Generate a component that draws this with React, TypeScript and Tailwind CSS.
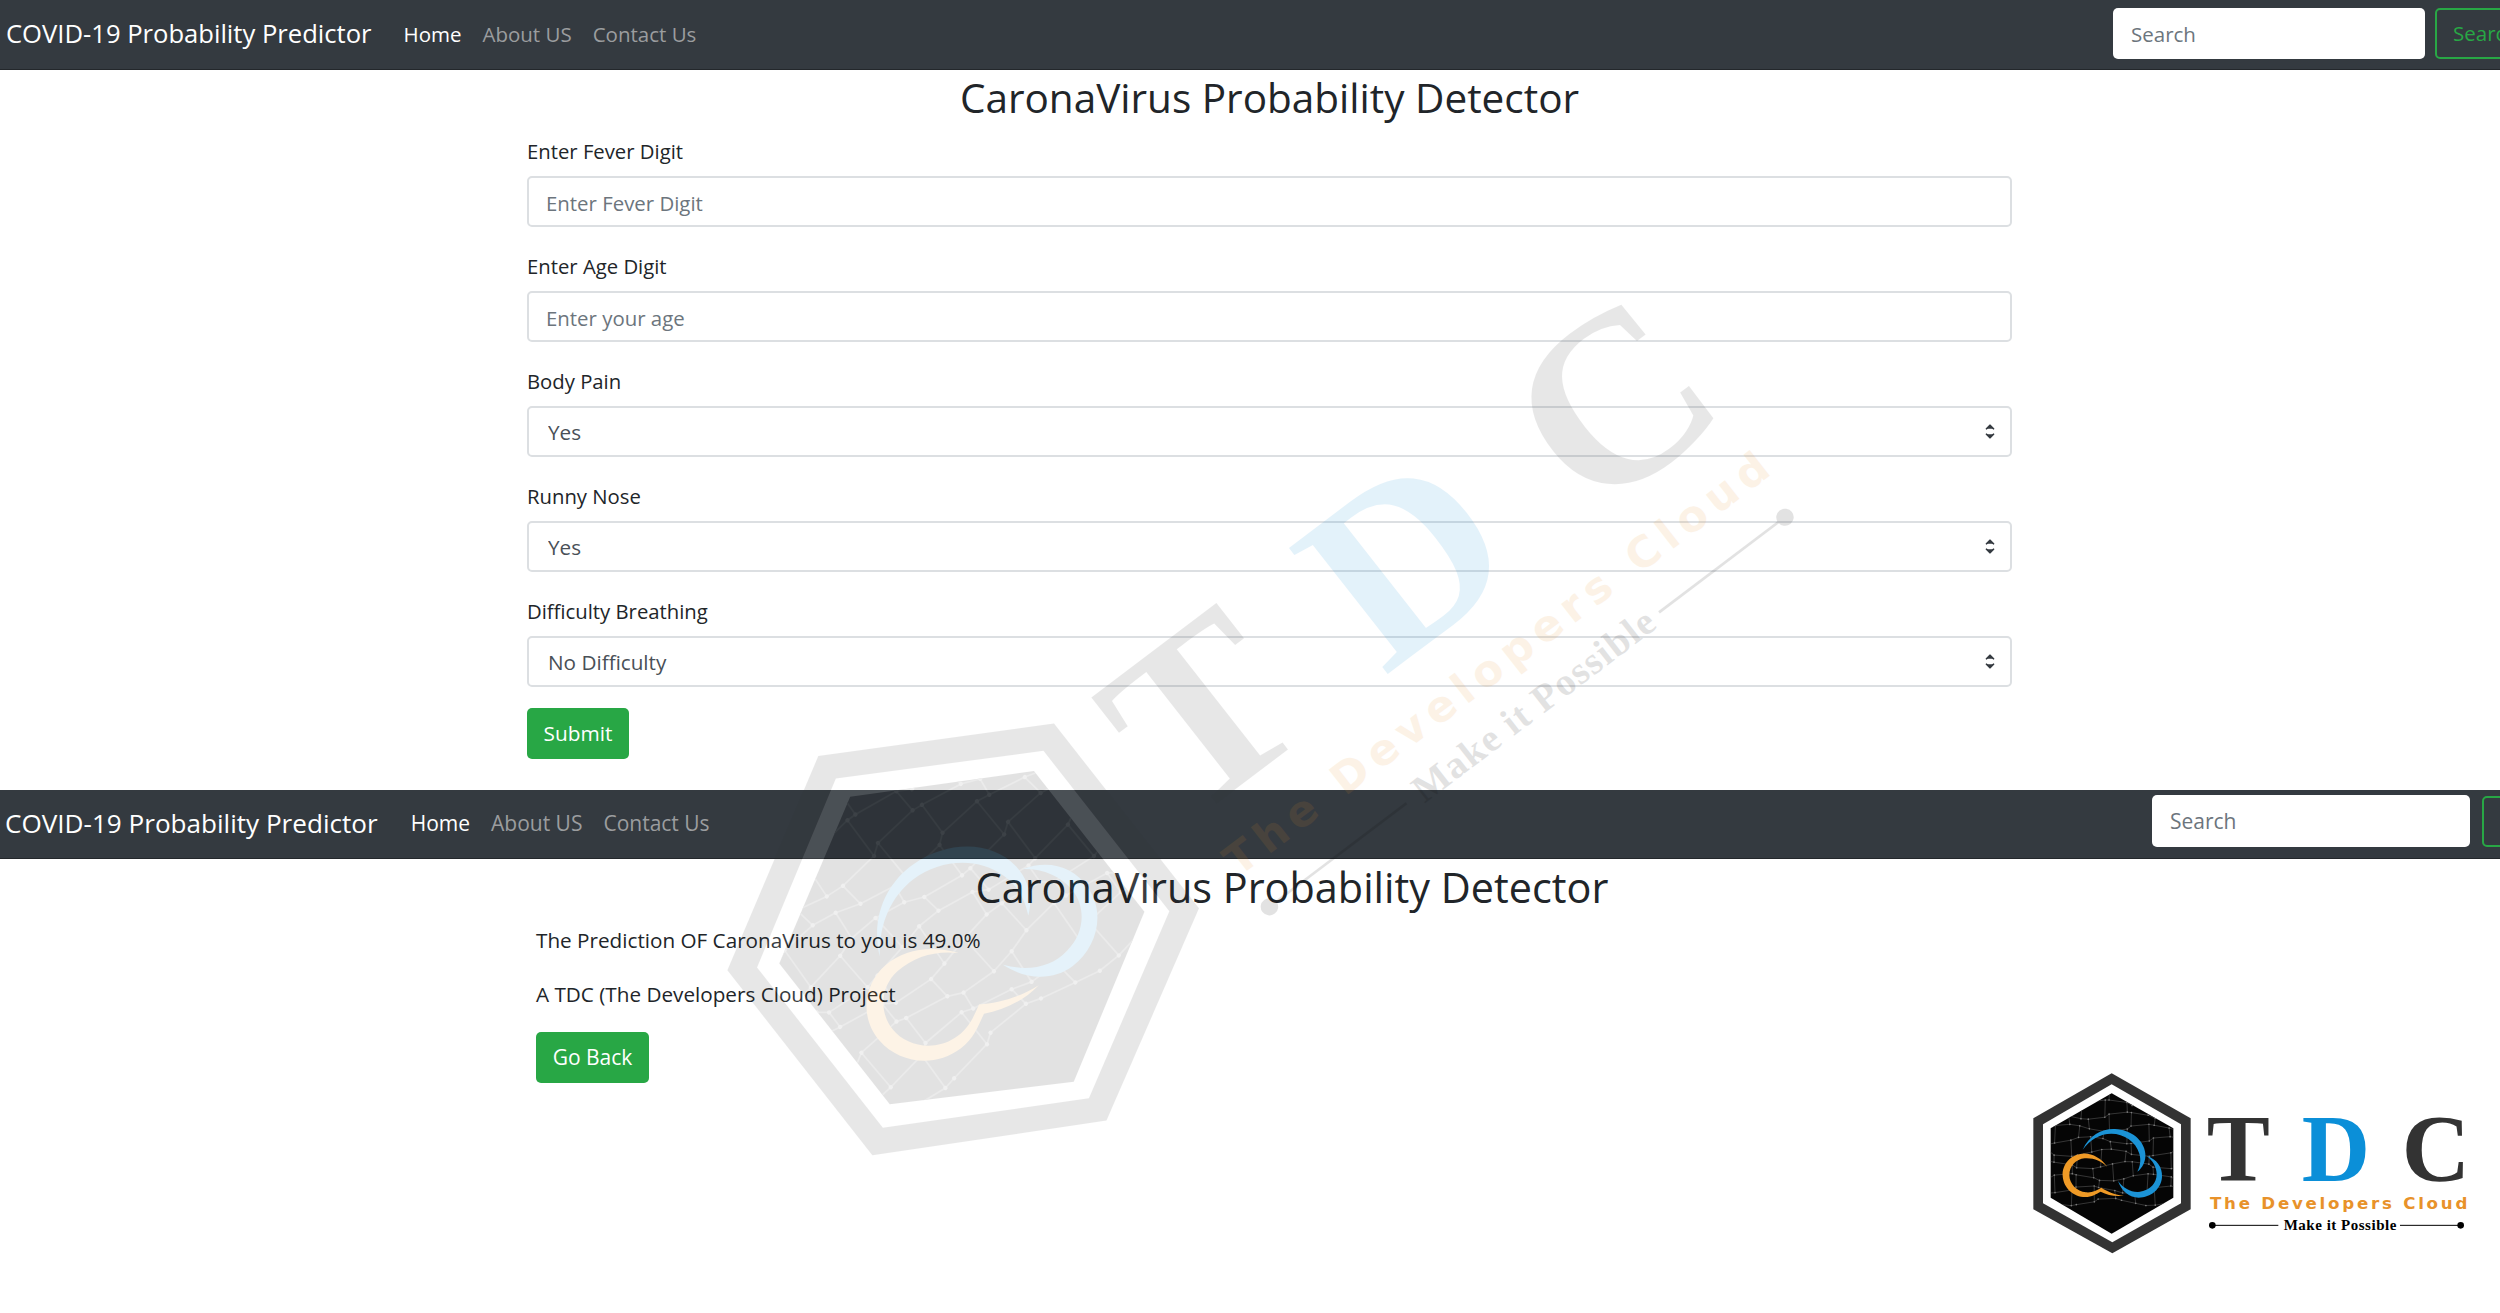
import { ChevronDown, ChevronUp } from "lucide-react";

const font = "font-['Open_Sans','Noto_Sans',sans-serif]";

// jittered honeycomb for the dark hexagon of the logo
const meshPoints: [number, number][][] = Array.from({ length: 13 }, (_, r) =>
  Array.from({ length: 13 }, (_, c) => {
    const jx = Math.sin(r * 12.9 + c * 78.2) * 11;
    const jy = Math.cos(r * 39.3 + c * 11.7) * 11;
    return [140 + c * 33 + jx, 150 + r * 37 + jy] as [number, number];
  })
);

function LogoArt({ clipId }: { clipId: string }) {
  return (
    <g>
      <defs>
        <clipPath id={clipId}>
          <polygon points="335,157 520,262 520,470 335,578 152,470 152,262" />
        </clipPath>
      </defs>
      <polygon points="335,97 572,232 572,505 337,637 100,505 100,232" fill="#333333" />
      <polygon points="335,130 543,250 543,487 337,604 129,487 129,250" fill="#ffffff" />
      <polygon points="335,157 520,262 520,470 335,578 152,470 152,262" fill="#050505" />
      <g clipPath={`url(#${clipId})`} stroke="#4f4f4f" strokeWidth="2" fill="none">
        {meshPoints.map((row, r) =>
          row.map(([x, y], c) => (
            <g key={`${r}-${c}`}>
              {c < 12 && r < 10 && <line x1={x} y1={y} x2={row[c + 1][0]} y2={row[c + 1][1]} />}
              {r < 9 && (r + c) % 2 === 0 && (
                <line x1={x} y1={y} x2={meshPoints[r + 1][c][0]} y2={meshPoints[r + 1][c][1]} />
              )}
              {r < 10 && <circle cx={x} cy={y} r="2.5" fill="#7d7d7d" stroke="none" />}
            </g>
          ))
        )}
      </g>
      <path
        d="M248 326C268 282 308 262 345 264C392 266 432 296 436 338C438 360 428 380 412 392C420 376 424 358 418 338C408 302 372 278 334 278C300 278 270 296 248 326Z"
        fill="#1b93d6"
      />
      <path
        d="M440 345C470 354 488 378 486 408C484 444 452 470 416 470C388 470 364 450 354 420C372 444 396 456 422 452C450 448 470 426 470 400C470 378 458 358 440 345Z"
        fill="#1b93d6"
      />
      <path
        d="M322 378C304 352 276 336 248 338C212 340 186 370 188 404C190 440 220 468 256 468C276 468 290 458 302 452C322 462 346 468 372 464C346 462 322 452 304 440C290 448 276 456 258 454C230 452 208 428 208 402C208 376 228 354 254 352C280 350 304 360 322 378Z"
        fill="#ef9a26"
      />
      <text x="620" y="420" fontFamily="'Liberation Serif',serif" fontWeight="700" fontSize="284" fill="#333333">T</text>
      <text x="905" y="420" fontFamily="'Liberation Serif',serif" fontWeight="700" fontSize="284" fill="#0b8fd8">D</text>
      <text x="1205" y="420" fontFamily="'Liberation Serif',serif" fontWeight="700" fontSize="284" fill="#333333">C</text>
      <text
        x="630"
        y="504"
        fontFamily="'DejaVu Sans',sans-serif"
        fontWeight="700"
        fontSize="50"
        fill="#e8922a"
        textLength="772"
        lengthAdjust="spacing"
      >
        The Developers Cloud
      </text>
      <line x1="637" y1="553" x2="835" y2="553" stroke="#000" strokeWidth="3" />
      <line x1="1200" y1="553" x2="1382" y2="553" stroke="#000" strokeWidth="3" />
      <circle cx="637" cy="553" r="10" fill="#000" />
      <circle cx="1382" cy="553" r="10" fill="#000" />
      <text
        x="851"
        y="566"
        fontFamily="'Liberation Serif',serif"
        fontWeight="700"
        fontSize="45"
        fill="#000"
        textLength="338"
        lengthAdjust="spacing"
      >
        Make it Possible
      </text>
    </g>
  );
}

function Navbar({
  heightClass,
  brandClass,
  linksClass,
  linkSize,
  inputClass,
  formClass,
}: {
  heightClass: string;
  brandClass: string;
  linksClass: string;
  linkSize: string;
  inputClass: string;
  formClass: string;
}) {
  return (
    <nav className={`${heightClass} bg-[#343a40] border-b border-[#23272b] flex items-center overflow-hidden`}>
      <span className={`${brandClass} text-white whitespace-nowrap`}>COVID-19 Probability Predictor</span>
      <div className={`${linksClass} ${linkSize} flex whitespace-nowrap`}>
        <a className="text-white">Home</a>
        <a className="text-[#9b9d9f]">About US</a>
        <a className="text-[#9b9d9f]">Contact Us</a>
      </div>
      <div className={`${formClass} ml-auto flex items-center shrink-0`}>
        <input
          placeholder="Search"
          className={`${inputClass} bg-white rounded-[5px] px-[18px] text-[#495057] placeholder:text-[#6c757d] ${linkSize}`}
        />
        <button className={`h-[51px] w-[105px] border-2 border-[#28a745] rounded-[5px] text-[#28a745] ${linkSize} text-left pl-[16px] whitespace-nowrap`}>
          Search
        </button>
      </div>
    </nav>
  );
}

function TextField({ label, placeholder }: { label: string; placeholder: string }) {
  return (
    <div className="mb-[25px]">
      <label className="block text-[20.3px] leading-[28px] text-[#212529] mb-[11px]">{label}</label>
      <input
        placeholder={placeholder}
        className="w-full h-[51px] bg-white border-2 border-[#dcdfe2] rounded-[5px] px-[17px] pt-[2px] text-[20.4px] placeholder:text-[#6c757d]"
      />
    </div>
  );
}

function SelectField({ label, value }: { label: string; value: string }) {
  return (
    <div className="mb-[25px]">
      <label className="block text-[20.3px] leading-[28px] text-[#212529] mb-[11px]">{label}</label>
      <div className="relative">
        <select
          defaultValue={value}
          className="appearance-none w-full h-[51px] bg-white border-2 border-[#dcdfe2] rounded-[5px] pl-[19px] pt-[2px] text-[20.7px] text-[#495057]"
        >
          <option>{value}</option>
        </select>
        <ChevronUp className="absolute right-[15px] top-[14px] w-[14px] h-[14px] text-[#343a40] fill-[#343a40]" strokeWidth={3} />
        <ChevronDown className="absolute right-[15px] top-[23px] w-[14px] h-[14px] text-[#343a40] fill-[#343a40]" strokeWidth={3} />
      </div>
    </div>
  );
}

export default function App() {
  return (
    <div className={`${font} relative w-[2500px] h-[1313px] bg-white overflow-hidden`}>
      {/* Form page */}
      <Navbar
        heightClass="h-[70px]"
        brandClass="ml-[6px] text-[25.6px]"
        linksClass="ml-[32px] gap-[21px]"
        linkSize="text-[20.5px]"
        inputClass="w-[312px] h-[51px]"
        formClass="gap-[10px] -mr-[40px] mb-[2px]"
      />
      <main className="w-[1485px] ml-[527px] h-[720px]">
        <h1 className="text-center text-[40.5px] leading-[56px] text-[#212529] mb-[11px]">
          CaronaVirus Probability Detector
        </h1>
        <TextField label="Enter Fever Digit" placeholder="Enter Fever Digit" />
        <TextField label="Enter Age Digit" placeholder="Enter your age" />
        <SelectField label="Body Pain" value="Yes" />
        <SelectField label="Runny Nose" value="Yes" />
        <SelectField label="Difficulty Breathing" value="No Difficulty" />
        <button className="-mt-[4px] h-[51px] w-[102px] bg-[#28a745] rounded-[5px] text-white text-[20.8px]">Submit</button>
      </main>

      {/* Result page */}
      <Navbar
        heightClass="h-[69px]"
        brandClass="ml-[5px] text-[26.1px]"
        linksClass="ml-[33px] gap-[21px]"
        linkSize="text-[21px]"
        inputClass="w-[318px] h-[52px]"
        formClass="gap-[12px] -mr-[87px] mb-[6px]"
      />
      <section className="flex justify-between items-end h-[454px]">
        <div className="self-start w-[1512px] shrink-0 ml-[536px]">
          <h1 className="text-center text-[41.4px] leading-[56px] text-[#212529] mb-[11px]">
            CaronaVirus Probability Detector
          </h1>
          <p className="text-[20.7px] leading-[28px] text-[#212529] mb-[26px]">The Prediction OF CaronaVirus to you is 49.0%</p>
          <p className="text-[20.7px] leading-[28px] text-[#212529] mb-[24px]">A TDC (The Developers Cloud) Project</p>
          <button className="h-[51px] w-[113px] bg-[#28a745] rounded-[5px] text-white text-[21px]">Go Back</button>
        </div>
        <svg viewBox="0 0 1500 720" className="w-[500px] h-[240px] shrink-0 -ml-[48px] mb-[32px]">
          <LogoArt clipId="logo-clip" />
        </svg>
      </section>

      {/* Watermark sits over both pages */}
      <svg
        viewBox="0 0 2500 1313"
        className="absolute inset-0 w-[2500px] h-[1313px] pointer-events-none opacity-[0.11]"
      >
        <g transform="matrix(0.692 -0.523 0.531 0.677 535 865.6)">
          <LogoArt clipId="watermark-clip" />
        </g>
      </svg>
    </div>
  );
}
